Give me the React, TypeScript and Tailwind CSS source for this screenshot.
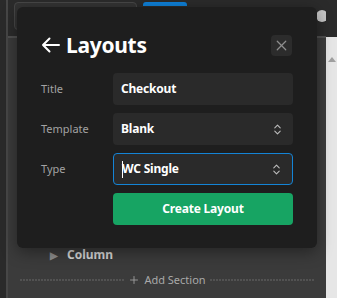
import { X, ChevronsUpDown, Plus } from "lucide-react";

const font = { fontFamily: '"Noto Sans", "Open Sans", sans-serif' };

const Field = ({
  label,
  value,
  select,
  active,
}: {
  label: string;
  value: string;
  select?: boolean;
  active?: boolean;
}) => (
  <div className="flex items-center">
    <div className="w-[72px] text-[11px] text-[#a3a3a3]">{label}</div>
    <div
      className={`flex h-[32px] flex-1 items-center justify-between rounded-[4px] bg-[#2a2a2a] pl-[8px] pr-[9px] ${
        active ? "border border-[#1484d6] pl-[7px] pr-[8px]" : ""
      }`}
    >
      <span className="relative text-[12px] font-bold tracking-[-0.2px] text-white">
        {active && (
          <span className="absolute left-0 top-[1px] h-[17px] w-px bg-white" />
        )}
        {value}
      </span>
      {select && <ChevronsUpDown size={13} strokeWidth={2} className="text-[#bdbdbd]" />}
    </div>
  </div>
);

const Dashes = () => (
  <div className="h-[2px] flex-1 bg-[repeating-linear-gradient(90deg,#525252_0_2px,transparent_2px_3px)]" />
);

export default function App() {
  return (
    <div className="relative flex h-[298px] w-[337px] overflow-hidden bg-[#2b2b2b]" style={font}>
      {/* left strip */}
      <div className="w-[6px] bg-[#2a2a2a]" />
      <div className="w-[2px] bg-[#474747]" />

      {/* main */}
      <div className="flex flex-1 flex-col">
        <div className="flex h-[36px] items-start gap-[6px] bg-[#2b2b2b] pl-[6px] pt-[2px]">
          <div className="h-[28px] w-[123px] rounded-[4px] border border-[#474747] bg-[#333333]" />
          <div className="h-[4px] w-[44px] rounded-t-[3px] bg-[#0f7fd6]" />
          <div className="ml-auto mr-[-2px] mt-[8px] h-[12px] w-[12px] rounded-full bg-[#c8c8c8]" />
        </div>
        <div className="h-[2px] bg-[#505050]" />
        <div className="flex flex-1 flex-col bg-[#3b3b3b] pt-[208px]">
          <div className="flex items-center pl-[42px] text-[12px] font-bold text-[#d6d6d6]">
            <span className="mr-[9px] text-[10px] text-[#8c8c8c]">▶</span>
            Column
          </div>
          <div className="mt-[8px] flex items-center gap-[4px] px-[12px]">
            <Dashes />
            <div className="flex items-center gap-[4px] text-[11px] text-[#a9a9a9]">
              <Plus size={12} strokeWidth={1.6} />
              Add Section
            </div>
            <Dashes />
          </div>
        </div>
      </div>

      {/* scrollbar */}
      <div className="flex w-[11px] flex-col">
        <div className="h-[37px] bg-[#2b2b2b]" />
        <div className="flex flex-1 justify-center bg-[#e6e6e6] pt-[20px]">
          <div className="h-0 w-0 border-x-[4px] border-b-[5px] border-x-transparent border-b-[#a0a0a0]" />
        </div>
      </div>

      {/* modal */}
      <div className="absolute left-[17px] top-[7px] w-[300px] rounded-[6px] bg-[#1e1e1e] px-[24px] pb-[23px] pt-[26px] shadow-[0_4px_16px_rgba(0,0,0,0.4)]">
        <div className="flex items-center justify-between">
          <div className="flex items-center gap-[6px] text-white">
            <svg width="19" height="16" viewBox="0 0 19 16" fill="none" stroke="currentColor" strokeWidth="2" strokeLinecap="round" strokeLinejoin="round">
              <path d="M18 8H2M8.5 1.5L2 8l6.5 6.5" />
            </svg>
            <span className="text-[21px] font-bold leading-[24px] tracking-[-0.3px]">Layouts</span>
          </div>
          <button className="mr-[1px] flex h-[21px] w-[21px] items-center justify-center rounded-[4px] bg-[#2c2c2c] text-[#8e8e8e]">
            <X size={17} strokeWidth={1.7} />
          </button>
        </div>
        <div className="mt-[16px] flex flex-col gap-[8px]">
          <Field label="Title" value="Checkout" />
          <Field label="Template" value="Blank" select />
          <Field label="Type" value="WC Single" select active />
          <div className="flex">
            <div className="w-[72px]" />
            <button className="h-[32px] flex-1 rounded-[4px] bg-[#17a463] text-[12px] font-bold tracking-[-0.2px] text-white">
              Create Layout
            </button>
          </div>
        </div>
      </div>
    </div>
  );
}
